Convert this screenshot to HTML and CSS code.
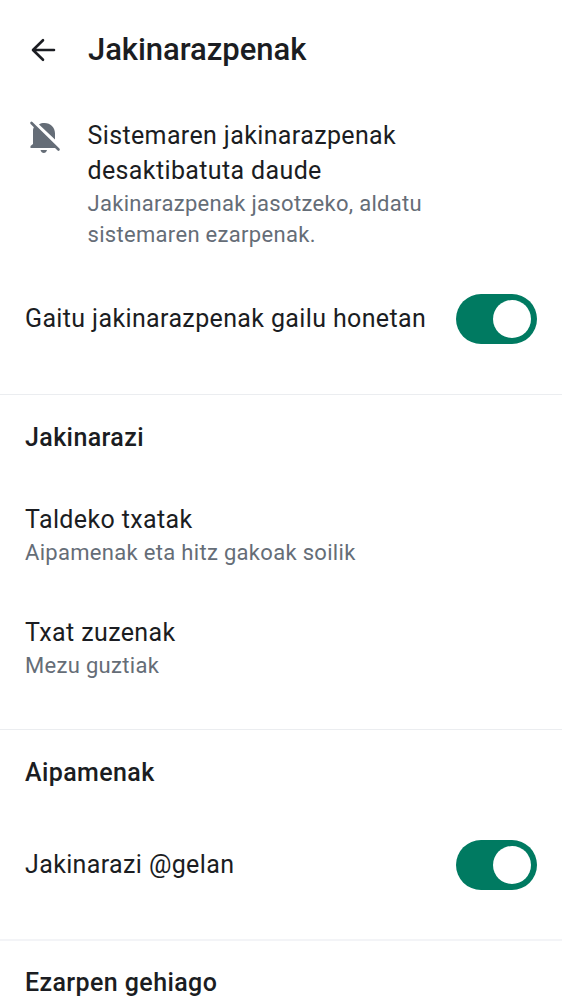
FILE: index.html
```html
<!DOCTYPE html>
<html lang="eu">
<head>
<meta charset="utf-8">
<title>Jakinarazpenak</title>
<link rel="stylesheet" href="styles.css">
</head>
<body>
<main class="screen">
  <header class="topbar">
    <svg class="back" viewBox="0 0 38 38"><path d="M29 19H8.500M18 9.200 8 19l10 9.800"/></svg>
    <h1 class="title">Jakinarazpenak</h1>
  </header>
  <section class="notice">
    <svg class="bell" viewBox="0 0 34 36"><path d="M11 4.500C12.500 3.300 14 3 16.500 3 22.500 3 27 7.500 27 13.500V19.500zM5.800 5.500 28 28H2.500v-2L5 24V11C5 9.500 5.200 8.500 5.800 7.500zM12.500 30h6.500c-.5 2-1.600 3-3.200 3s-2.800-1-3.300-3z"/><path class="slash" d="M3.500 3 30.500 29.500"/></svg>
    <div>
      <p class="label">Sistemaren jakinarazpenak<br>desaktibatuta daude</p>
      <p class="hint">Jakinarazpenak jasotzeko, aldatu<br>sistemaren ezarpenak.</p>
    </div>
  </section>
  <div class="row row-device"><span class="label">Gaitu jakinarazpenak gailu honetan</span><span class="switch"></span></div>
  <section class="group group-notify">
    <h2 class="heading">Jakinarazi</h2>
    <div class="item"><p class="label">Taldeko txatak</p><p class="hint">Aipamenak eta hitz gakoak soilik</p></div>
    <div class="item"><p class="label">Txat zuzenak</p><p class="hint">Mezu guztiak</p></div>
  </section>
  <section class="group group-mentions">
    <h2 class="heading">Aipamenak</h2>
    <div class="row row-room"><span class="label">Jakinarazi @gelan</span><span class="switch"></span></div>
  </section>
  <section class="group group-more"><h2 class="heading">Ezarpen gehiago</h2></section>
</main>
</body>
</html>
```
FILE: styles.css
```css
* { box-sizing: border-box; }
body, h1, h2, p { margin: 0; }
body { background: #fff; color: #1b1d22; font-family: Roboto, sans-serif; }
.screen { height: 1000px; overflow: hidden; }
.topbar { display: flex; align-items: center; height: 100px; padding-left: 25px; gap: 25px; }
.back { width: 38px; height: 38px; fill: none; stroke: #1b1d22; stroke-width: 2.6; stroke-linecap: round; stroke-linejoin: round; }
.title { font-size: 31px; font-weight: 500; line-height: 38px; letter-spacing: -.04px; }
.notice { display: flex; gap: 25.5px; height: 168px; padding: 19px 25px 0 28px; }
.bell { width: 34px; height: 36px; margin-top: 1px; fill: #656d77; flex: none; }
.slash { fill: none; stroke: #656d77; stroke-width: 2.6; stroke-linecap: round; }
.label { font-size: 25px; line-height: 34.5px; letter-spacing: .37px; }
.hint { color: #656d77; font-size: 22px; line-height: 31px; letter-spacing: .31px; }
.row { display: flex; align-items: center; justify-content: space-between; padding: 0 25px; }
.row-device { height: 102px; margin-bottom: 24px; }
.switch { width: 81px; height: 50px; padding: 6px; border-radius: 25px; background: #007a61; display: flex; justify-content: flex-end; }
.switch::before { content: ""; width: 38px; height: 38px; border-radius: 50%; background: #fff; }
.group { border-top: 1px solid #ebedf0; padding-top: 26px; }
.group-notify { height: 335px; }
.group-mentions { height: 210px; }
.group-more { padding-top: 25px; border-top: 2px solid #f3f4f7; }
.heading { font-size: 25px; font-weight: 500; line-height: 34px; padding-left: 25px; letter-spacing: .4px; }
.item { height: 113px; padding: 48px 25px 0; }
.item .label { line-height: 34px; }
.item .hint { margin-top: .5px; line-height: 30px; }
.row-room { height: 149px; }
.row-room .label { line-height: 35px; }
```
